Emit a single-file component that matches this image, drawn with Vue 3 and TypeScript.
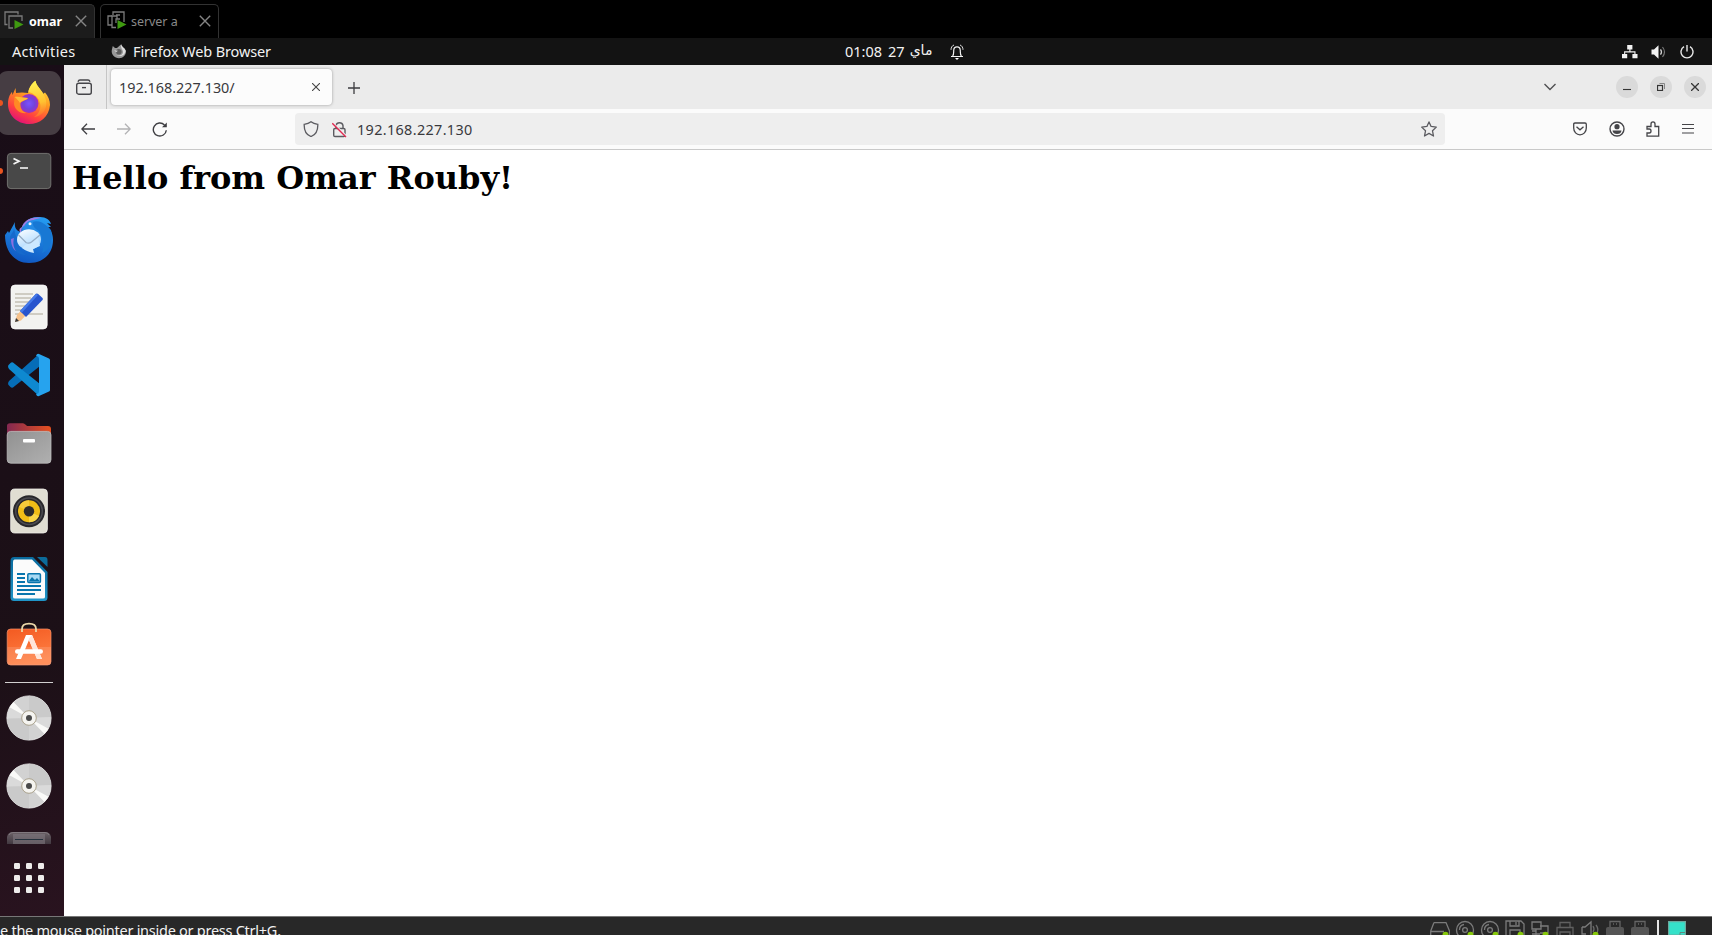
<script setup lang="ts">
const vmTabs = [
  { name: 'omar', active: true },
  { name: 'server a', active: false },
]
const dots = [0, 12, 24]
const statusDots = [true, true, true, true, true, false, true, false, false]
</script>

<template>
  <div class="screen">
    <header class="vm-tabs">
      <div v-for="t in vmTabs" :key="t.name" class="vm-tab" :class="{ active: t.active }">
        <svg class="vm-icon" width="20" height="20" viewBox="0 0 20 20" fill="none" stroke="#7b7b7b" stroke-width="1.3">
          <g v-if="t.active">
            <path d="M3.5 13.5H1V1H14V3.5" />
            <path d="M9 17H5V5H18V10" />
          </g>
          <g v-else>
            <path d="M6 4V1H17V11M5 14H1V5H5" />
            <path d="M9 16.5H5V5H10V8M9 12V8H13M9 4H13" />
          </g>
          <path d="M10.5 9L19.5 13.5L10.5 18Z" fill="#3f9a10" stroke="none" />
        </svg>
        <span class="vm-name">{{ t.name }}</span>
        <svg class="vm-close" width="12" height="12" viewBox="0 0 12 12" stroke="#858585" stroke-width="1.4"><path d="M.8.8L11.2 11.2M11.2.8L.8 11.2" /></svg>
      </div>
    </header>

    <div class="topbar">
      <span class="activities">Activities</span>
      <svg class="ff-mini" width="16" height="16" viewBox="0 0 16 16">
        <path d="M.8 6L1.8 2L4 4L6 4L10.2.3C10.7 3.3 13.6 3.5 14.8 7C15.5 11 12 14.2 8 14.2C3.6 14.2 0 10.5 .8 6Z" fill="#999" />
        <path d="M10.2.3C9 4 12.4 5.5 12 8.6C11.5 11.4 8 12.4 5 10.8C9 13.6 14 11.6 14.8 7C13.6 3.5 10.7 3.3 10.2.3Z" fill="#dedede" />
        <circle cx="7.8" cy="7.8" r="2.8" fill="#5c5c5c" /><path d="M3 6.3L7 6.7L5.2 8.2" fill="#d0d0d0" />
      </svg>
      <span class="app-name">Firefox Web Browser</span>
      <div class="clock"><span>01:08</span><span>27</span><span class="month" lang="ar">ماي</span></div>
      <svg class="bell" width="14" height="16" viewBox="0 0 14 16" fill="none" stroke="#f2f2f2" stroke-width="1.2">
        <path d="M1 12.5H13M2.6 12C4 10.5 3.6 8.5 3.7 6.5C3.8 1.7 10.2 1.7 10.3 6.5C10.4 8.5 10 10.5 11.4 12" />
        <path d="M4 1C2 1.7 1 3.6 1 5.8M10 1C12 1.7 13 3.6 13 5.8" stroke-width=".9" />
        <path d="M5 14H9L7 16Z" fill="#fff" stroke="none" />
      </svg>
      <div class="system">
        <svg width="16" height="14" viewBox="0 0 16 14" fill="#f2f2f2"><path d="M5.2 0H10.4V4.5H8.5V6.3H13.5V9H15.5V13.2H10.4V9H12.4V7.4H3.2V9H5.2V13.2H0V9H2.1V6.3H7.3V4.5H5.2Z" /></svg>
        <svg width="16" height="14" viewBox="0 0 16 14" fill="none"><path d="M.5 4.5H3L7.5 .3V13.7L3 9.5H.5Z" fill="#f2f2f2" /><path d="M9.5 4.4Q11.5 7 9.5 9.6" stroke="#d0d0d0" stroke-width="1.3" /><path d="M11.5 2Q15.5 7 11.5 12" stroke="#777" stroke-width="1.2" /></svg>
        <svg width="14" height="14" viewBox="0 0 14 14" fill="none" stroke="#e8e8e8" stroke-width="1.4"><path d="M7 0V6.5M4 1.7A6 6 0 1 0 10 1.7" /></svg>
      </div>
    </div>

    <div class="desktop">
      <nav class="dock">
        <svg class="slot" viewBox="0 0 64 64">
          <defs>
            <linearGradient id="ffa" x1=".8" y1="0" x2=".3" y2="1"><stop offset="0" stop-color="#fff04a" /><stop offset=".4" stop-color="#ff9a1f" /><stop offset=".75" stop-color="#ff4040" /><stop offset="1" stop-color="#e0107a" /></linearGradient>
            <linearGradient id="ffb" x1=".5" y1="0" x2=".6" y2="1"><stop offset="0" stop-color="#fff453" /><stop offset=".6" stop-color="#ffc231" /><stop offset="1" stop-color="#ff6a2c" /></linearGradient>
            <radialGradient id="ffc"><stop offset="0" stop-color="#7b52ff" /><stop offset=".6" stop-color="#7243d9" /><stop offset="1" stop-color="#a32fbd" /></radialGradient>
          </defs>
          <rect width="64" height="64" rx="11" fill="#463d43" />
          <circle cx="3" cy="32" r="3" fill="#e95420" />
          <path d="M18.5 17L19 22L25 21.5L31 22C32 16 36 11.5 38.5 9.8C39 15 45 19 46 23L48 21.5C51 25 53 29 53 34C52 46 43 53 32 53C20 53 11 44 11 33C11 27 13 23 15 21L15.5 24Z" fill="url(#ffa)" />
          <path d="M31.5 21C32 16 36 11.5 38.5 9.8C39 15 45 19 47.5 25C52 34 48 45 37 46C43 42 45 36 42 29C40 25 36 22 31.5 21Z" fill="url(#ffb)" />
          <circle cx="32" cy="32.5" r="9.5" fill="url(#ffc)" />
          <path d="M17.5 26C20 24 25 27 31 27C29 30 26 29 23.5 32C23 37 25 41 30 42C23 43 18 39 17 33Z" fill="#ff8a24" />
          <path d="M17.5 26C22 25 26 27 31 27C28 30 25 29 23 32C21 29 20 28 17.5 26Z" fill="#ffbd38" />
        </svg>
        <svg class="slot" viewBox="0 0 64 64">
          <circle cx="3" cy="32" r="3" fill="#e95420" />
          <rect x="10.4" y="14.4" width="43.4" height="35.2" rx="3.5" fill="#484848" stroke="#72726f" />
          <path d="M16.5 19.5L22 22.3L16.5 25" fill="none" stroke="#f4f4f4" stroke-width="1.8" /><path d="M23 29H31" stroke="#f4f4f4" stroke-width="1.6" />
        </svg>
        <svg class="slot" viewBox="0 0 64 64">
          <defs><linearGradient id="tba" x1=".7" y1="0" x2=".4" y2="1"><stop offset="0" stop-color="#259bf0" /><stop offset="1" stop-color="#1058c3" /></linearGradient><linearGradient id="tbb" x1="0" y1="0" x2=".5" y2="1"><stop offset="0" stop-color="#fff" /><stop offset="1" stop-color="#a8d7ff" /></linearGradient></defs>
          <path d="M8 28L11 24L12 26L18 15C17 21 20 24 24 25C24 16 32 9 43 10C49 10 53 13 54 17L50 16L54 20L51 20C55 24 56 29 56 33C56 47 46 56 32 56C18 56 8 45 8 28Z" fill="url(#tba)" />
          <path d="M25 20C27 14 34 9 44 11C37 12 34 14 31 18C27 18 24 20 24 26C21 23 23 21 25 20Z" fill="#a27be2" />
          <path d="M33 17C36 13 44 13 51 20L54 23C57 36 51 44 45 46C48 36 46 27 37 23C34 21 32 19 33 17Z" fill="#1878d4" />
          <path d="M26 23C27 17 31 13 37 13C34 16 37 22 42 24L45 30C40 25 32 24 26 27Z" fill="#258be5" />
          <path d="M13 31C13 42 21 48 29 48C23 44 21 39 21 31C18 30 18 24 17 22C16 26 13 28 13 31Z" fill="#1669cc" />
          <path d="M14 32C14 38 16 42 19 44C16 40 16 35 17 31Z" fill="#8b70df" />
          <ellipse cx="32" cy="32.5" rx="12" ry="10.3" fill="url(#tbb)" /><path d="M25 41C29 44 32 45 37 46L36 42L43 39L41 31L28 38Z" fill="#cbe8ff" /><path d="M21.5 28L29 35.5Q31.8 37 34.5 35L43 28" fill="none" stroke="#95adc6" stroke-width="1.3" /><circle cx="33" cy="16.8" r="1.5" fill="#e9f4ff" />
        </svg>
        <svg class="slot" viewBox="0 0 64 64">
          <rect x="14" y="10" width="36.2" height="44" rx="4" fill="#f2f2f0" stroke="#fff" stroke-width=".7" />
          <path d="M18 19H36M18 23H34M18 27H32M18 31H31M18 35H28M18 39H46" stroke="#c3c0b4" stroke-width="1.7" />
          <path d="M37 21L42 26L24 45.5L18 47L20 40Z" fill="#f7c28b" /><path d="M18 47L19 43L22 46Z" fill="#37383a" />
          <path d="M23 36L39 18.8Q40 18 41.2 19L45.5 23Q46.4 24 45.5 25L29 42Z" fill="#2855ce" /><path d="M23 36L39 18.8L41 20L24.8 37.7Z" fill="#4479e9" />
        </svg>
        <svg class="slot" viewBox="0 0 64 64">
          <path d="M12 38L42 11L43 23L16 44.5Q14.5 45 13.5 44L11.3 41.8Q10.4 40.3 12 38Z" fill="#066db7" />
          <path d="M12 26L42 53L43 41L16 19.5Q14.5 19 13.5 20L11.3 22.2Q10.4 23.7 12 26Z" fill="#0e89d0" />
          <path d="M42 11L52 15.5Q53 16 53 17V47Q53 48 52 48.5L42 53Q40 54 39 51Q42 51 42 48V16Q42 13 39 13Q40 10 42 11Z" fill="#26a3ee" />
        </svg>
        <svg class="slot" viewBox="0 0 64 64">
          <defs><linearGradient id="fla"><stop stop-color="#842851" /><stop offset="1" stop-color="#e65120" /></linearGradient><linearGradient id="flb" x2="1" y2="1"><stop stop-color="#919191" /><stop offset="1" stop-color="#b0b0b0" /></linearGradient></defs>
          <path d="M10 30V15Q10 12.3 13 12.3H26Q27 12.3 29 14L30 15H51Q54 15 54 18V30Z" fill="url(#fla)" /><rect x="10.2" y="20.4" width="43.8" height="31.8" rx="3.5" fill="url(#flb)" stroke="#bdbdbd" stroke-width=".8" /><rect x="26" y="28" width="12" height="3.4" rx="1" fill="#fff" />
        </svg>
        <svg class="slot" viewBox="0 0 64 64">
          <rect x="13.7" y="10" width="36.7" height="44" rx="4" fill="#e0ddd2" stroke="#efeee8" stroke-width=".8" />
          <circle cx="32" cy="32.2" r="16" fill="#28272b" /><circle cx="32" cy="32.2" r="13.3" fill="none" stroke="#4b4a50" stroke-width="1.5" /><circle cx="32" cy="32.2" r="11" fill="#f0bd16" /><path d="M32 32.2L22 27.7A11 11 0 0 1 32 21.2Z" fill="#f5cb3a" /><path d="M32 32.2L42 37A11 11 0 0 1 32 43.2Z" fill="#f8d547" /><circle cx="32" cy="32.2" r="5.2" fill="#2c2c2c" />
        </svg>
        <svg class="slot" viewBox="0 0 64 64">
          <defs><linearGradient id="lwa" x2="0" y2="1"><stop stop-color="#096a9d" /><stop offset="1" stop-color="#2095c8" /></linearGradient></defs>
          <path d="M17 10H36L50.5 25V50.5Q50.5 54 47 54H17Q13.5 54 13.5 50.5V14Q13.5 10 17 10Z" fill="url(#lwa)" /><path d="M17.5 12.5H35L48 26V50Q48 51.5 46 51.5H18Q16 51.5 16 50V15Q16 12.5 17.5 12.5Z" fill="#fbfbfb" /><path d="M40 10H48Q50.5 10 50.5 13V20Z" fill="#0c6b9a" />
          <path d="M20 27H28M20 31H28M20 35H28M20 39H44M20 43H44M20 47H38" stroke="#0875ad" stroke-width="2" /><rect x="30.8" y="26.8" width="12.6" height="8.6" rx="1" fill="#a7d9f3" stroke="#0875ad" stroke-width="1.5" /><path d="M31.5 34.5L35 30L38 33L40 31L43 34.5Z" fill="#0875ad" />
        </svg>
        <svg class="slot" viewBox="0 0 64 64">
          <defs><linearGradient id="swa" x2=".3" y2="1"><stop stop-color="#f35a21" /><stop offset="1" stop-color="#ff7f43" /></linearGradient></defs>
          <rect x="10.2" y="14" width="43.8" height="36" rx="3.5" fill="url(#swa)" stroke="#f5946f" stroke-width=".7" /><path d="M10.5 32H54V47Q54 50 51 50H13Q10.5 50 10.5 47Z" fill="#fff" opacity=".13" /><path d="M25 17V14Q25 8.7 32 8.7T39 14V17" fill="none" stroke="#ead6a8" stroke-width="1.8" />
          <path d="M29 20H35L45 44H40L32 25L24 44H19Z" fill="#fff" /><path d="M35 20L45 44H40L31.5 24Z" fill="#ffe5d9" /><rect x="18" y="34.3" width="28" height="4.5" rx="2.2" fill="#fff" />
        </svg>
        <i class="separator"></i>
        <svg v-for="n in 2" :key="n" class="slot" viewBox="0 0 64 64">
          <circle cx="32" cy="32" r="22.1" fill="#d2d2d2" stroke="#efefef" stroke-width=".8" /><path d="M32 32V9.8A22 22 0 0 1 54 31ZM32 32V54A22 22 0 0 1 10 33Z" fill="#cacaca" /><path d="M32 32L54 31A22 22 0 0 1 50 45ZM32 32L10 32A22 22 0 0 1 13 21Z" fill="#dadada" /><path d="M32 32L12.5 21.2L16.5 16ZM32 32L51.5 42.8L47.5 48Z" fill="#fafaf8" /><circle cx="32" cy="32" r="7.3" fill="#f5f4f0" stroke="#aaa28d" /><circle cx="32" cy="32" r="3" fill="#4a4a4a" />
        </svg>
        <svg class="drive" viewBox="0 0 64 22">
          <defs><linearGradient id="dra" x2="0" y2="1"><stop stop-color="#6c6268" /><stop offset="1" stop-color="#413840" /></linearGradient></defs>
          <path d="M10 22V15Q11 10 16 10H48Q53 10 54 15V22Z" fill="url(#dra)" /><path d="M12 13Q13 10.5 16 10.5H48Q51 10.5 52 13" fill="none" stroke="#918990" stroke-width=".6" /><rect x="16" y="12" width="32" height="10" fill="#847c84" opacity=".55" /><path d="M18 17.5H46" stroke="#25313d" />
        </svg>
        <svg class="grid" width="30" height="30" viewBox="0 0 30 30" fill="#eeeceb"><template v-for="y in dots" :key="y"><rect v-for="x in dots" :key="x" :x="x" :y="y" width="6" height="6" rx="1.2" /></template></svg>
      </nav>

      <main class="browser">
        <div class="tabbar">
          <div class="view-button"><svg width="16" height="16" viewBox="0 0 16 16" fill="none" stroke="#454549" stroke-width="1.4"><rect x=".7" y="4.2" width="14.6" height="11" rx="2" /><path d="M2 2.8Q2.6 1 4 1H12Q13.4 1 14 2.8" /><path d="M6 8.6H10" /></svg></div>
          <div class="tab"><span>192.168.227.130/</span><svg width="8" height="8" viewBox="0 0 8 8" stroke="#454545" stroke-width="1.1"><path d="M0 0L8 8M8 0L0 8" /></svg></div>
          <svg class="plus" width="12" height="12" viewBox="0 0 12 12" stroke="#3d3d40" stroke-width="1.3"><path d="M6 0V12M0 6H12" /></svg>
          <svg class="chevron" width="12" height="8" viewBox="0 0 12 8" fill="none" stroke="#505052" stroke-width="1.4"><path d="M.5 1L6 6.5L11.5 1" /></svg>
          <div class="window-buttons">
            <span><svg width="8" height="8" viewBox="0 0 8 8" fill="none" stroke="#353535" stroke-width="1.1"><path d="M0 6.5H8" /></svg></span>
            <span><svg width="8" height="8" viewBox="0 0 8 8" fill="none" stroke="#353535"><rect x=".5" y="2.5" width="5" height="5" stroke-width="1.2" /><path d="M2.5.5H7.5V6" stroke="#858585" /></svg></span>
            <span><svg width="8" height="8" viewBox="0 0 8 8" stroke="#353535" stroke-width="1.3"><path d="M0 0L8 8M8 0L0 8" /></svg></span>
          </div>
        </div>
        <div class="toolbar">
          <svg class="back" width="14" height="12" viewBox="0 0 14 12" fill="none" stroke="#3e3e42" stroke-width="1.3"><path d="M14 6H1M6 .7L.8 6L6 11.3" /></svg>
          <svg class="forward" width="14" height="12" viewBox="0 0 14 12" fill="none" stroke="#b2b2b4" stroke-width="1.3"><path d="M0 6H13M8 .7L13.2 6L8 11.3" /></svg>
          <svg class="reload" width="16" height="16" viewBox="0 0 16 16" fill="none" stroke="#3e3e42" stroke-width="1.4"><path d="M12.5 4A6.5 6.5 0 1 0 14.3 9.2" /><path d="M14.8 1.5V6.3H10Z" fill="#3e3e42" stroke="none" /></svg>
          <div class="address">
            <svg class="shield" width="16" height="16" viewBox="0 0 16 16" fill="none" stroke="#5b5b60" stroke-width="1.3"><path d="M8 .8Q10.5 3 14.8 3.3C15 9 13.5 13.5 8 15.5C2.5 13.5 1 9 1.2 3.3Q5.5 3 8 .8Z" /></svg>
            <svg class="lock" width="15" height="17" viewBox="0 0 15 17" fill="none" stroke="#5b5b60" stroke-width="1.4"><rect x="1.7" y="7.5" width="11.3" height="8" rx="1.3" /><path d="M4 7.5V4.5A3.6 3.6 0 0 1 11 4.5V7.5" /><path d="M1 1.6L14.3 14.8" stroke="#eee" stroke-width="1.3" /><path d="M.3 2.3L14 16" stroke="#e22850" stroke-width="1.3" /></svg>
            <span>192.168.227.130</span>
            <svg class="star" width="16" height="16" viewBox="0 0 16 16" fill="none" stroke="#5b5b60" stroke-width="1.3" stroke-linejoin="round"><path d="M8 .9L10.1 5.4L15.3 6.1L11.5 9.8L12.5 15L8 12.4L3.5 15L4.5 9.8L.7 6.1L5.9 5.4Z" /></svg>
          </div>
          <div class="actions">
            <svg width="14" height="14" viewBox="0 0 14 14" fill="none" stroke="#454549" stroke-width="1.3"><path d="M2 1H12Q13.3 1 13.3 2.3V6C13.3 10 10.5 12.8 7 12.8S.7 10 .7 6V2.3Q.7 1 2 1Z" /><path d="M3.5 4.7L7 7.8L10.5 4.7" /></svg>
            <svg width="16" height="16" viewBox="0 0 16 16"><circle cx="8" cy="8" r="7" fill="none" stroke="#454549" stroke-width="1.4" /><circle cx="8" cy="5.7" r="2.6" fill="#454549" /><path d="M3.5 9.5H12.5Q12 13 8 13T3.5 9.5Z" fill="#454549" /></svg>
            <svg width="14" height="16" viewBox="0 0 14 16" fill="none" stroke="#454549" stroke-width="1.3"><path d="M1 8V5.5H5V3Q5 .8 7 .8T9 3V5.5H12.7V15.2H1V12H3.2Q5 12 5 10T3.2 8Z" /></svg>
            <svg width="12" height="12" viewBox="0 0 12 12" stroke="#454549" stroke-width="1.2"><path d="M0 1.5H12M0 5.5H12M0 10H12" /></svg>
          </div>
        </div>
        <article><h1>Hello from Omar Rouby!</h1></article>
      </main>
    </div>

    <footer class="statusbar">
      <span class="hint">e the mouse pointer inside or press Ctrl+G.</span>
      <div class="devices">
        <svg v-for="(on, i) in statusDots" :key="i" width="20" height="15" viewBox="0 0 20 15" fill="none" stroke="#7b7b7b" stroke-width="1.3">
          <path v-if="i === 0" d="M4 2.6H16L19.5 11V15M4 2.6L.7 11V15M1 11.5H14" />
          <g v-else-if="i < 3"><circle cx="10" cy="10" r="8.5" /><circle cx="10" cy="10" r="2.4" /><path d="M4.5 10A5.5 5.5 0 0 1 9 4.5" /></g>
          <path v-else-if="i === 3" d="M1 15V1H16L19 4V15M5 1V6H14V1M11 2V5M5 15V10H15V15" />
          <path v-else-if="i === 4" d="M2 2H11V9H2ZM10 6H18V13H10M2 11H6M6 9V15M2 14H10" />
          <path v-else-if="i === 5" d="M5 7V2.5H15V7M2 15V7.5H18V15M5 15V12H15V15" stroke="#606060" />
          <g v-else-if="i === 6"><path d="M2 7H5L11 2V15M2 7V14H6" /><path d="M13 6Q15 9 13 12M16 5Q19 9 17 13" stroke="#696969" /></g>
          <g v-else stroke="#656565"><path d="M5 7V1.5H15V7" /><path d="M1 15V9Q1 7 3 7H17Q19 7 19 9V15Z" fill="#555" stroke="none" /><path d="M8 4H9M11 4H12" /></g>
          <circle v-if="on" cx="15.5" cy="14.7" r="3" fill="#86c80b" stroke="none" />
        </svg>
        <i class="divider"></i>
        <svg class="note" width="18" height="15" viewBox="0 0 18 15"><path d="M.6 1.6H17.4V15H.6Z" fill="#35e1c9" stroke="#6ba99e" stroke-width="1.2" /><path d="M12 15V12.5H17" fill="none" stroke="#62877f" /></svg>
      </div>
    </footer>
  </div>
</template>

<style>
body { margin: 0; overflow: hidden; background: #000; }
</style>
<style scoped>
.screen { width: 1712px; height: 935px; overflow: hidden; display: flex; flex-direction: column; background: #000; font-family: "Noto Sans", sans-serif; }
.screen * { box-sizing: border-box; }
svg { display: block; flex: none; }
span { white-space: nowrap; }
.vm-tabs { height: 38px; flex: none; display: flex; align-items: flex-end; gap: 5px; }
.vm-tab { height: 34px; width: 119px; border: 1px solid #323232; border-bottom: 0; border-radius: 5px 5px 0 0; display: flex; align-items: center; padding: 0 7px 1px 6px; color: #898989; font-size: 12.5px; }
.vm-tab.active { width: 95px; border-left: 0; border-radius: 0 5px 0 0; background: #1c1c1c; color: #fff; font-weight: 700; padding-left: 4px; }
.vm-name { margin-left: 4px; letter-spacing: -.05px; }
.active .vm-name { letter-spacing: 0; margin-left: 5px; }
.vm-close { margin-left: auto; }
.topbar { height: 27px; flex: none; background: #131313; color: #f2f2f2; display: flex; align-items: center; font-size: 14.5px; }
.topbar > span, .clock { padding-bottom: 2px; }
.activities { width: 100px; padding-left: 12px; letter-spacing: .3px; }
.ff-mini { margin-left: 11px; }
.app-name { margin-left: 6px; width: 712px; letter-spacing: -.12px; }
.clock { display: flex; width: 105px; }
.clock span + span { margin-left: 6px; }
.clock .month { font-family: "DejaVu Sans", sans-serif; font-size: 14px; padding-top: 1px; margin-left: 5px; }
.system { margin-left: auto; margin-right: 18px; display: flex; gap: 13px; align-items: center; }
.desktop { height: 851px; flex: none; display: flex; }
.dock { width: 64px; background: linear-gradient(165deg, #190d17, #1c1017 70%, #29131f); padding-top: 6px; overflow: hidden; flex: none; display: flex; flex-direction: column; }
.slot { width: 64px; height: 64px; margin: 0 0 4px -3px; }
.separator { width: 48px; height: 1px; background: #d1cfd0; margin: -1px 0 3px 5px; }
.drive { width: 64px; height: 22px; margin-left: -3px; }
.grid { margin: 19px 0 0 14px; }
.browser { flex: 1; min-width: 0; background: #fff; color: #39393d; }
.tabbar { height: 44px; display: flex; align-items: center; background: #ebebeb; }
.view-button { width: 43px; height: 44px; border-right: 1px solid #c5c5c5; display: flex; align-items: center; justify-content: center; padding-right: 2px; }
.tab { width: 221px; height: 36px; margin-left: 4px; border-radius: 4px; background: #fcfcfc; box-shadow: 0 0 3px #999; display: flex; align-items: center; justify-content: space-between; padding: 0 12px 0 8px; font-size: 14.4px; }
.plus { margin-left: 16px; margin-top: 1px; }
.chevron { margin-left: auto; }
.window-buttons { display: flex; gap: 12px; margin: 0 6px 0 60px; }
.window-buttons span { width: 22px; height: 22px; border-radius: 50%; background: #dadada; display: flex; align-items: center; justify-content: center; }
.toolbar { height: 41px; display: flex; align-items: center; background: #fbfbfb; border-bottom: 1px solid #c9c9c9; }
.back { margin-left: 17px; }
.forward { margin-left: 22px; }
.reload { margin-left: 21px; }
.address { width: 1150px; height: 32px; margin-left: 127px; border-radius: 4px; background: #eee; display: flex; align-items: center; font-size: 14.4px; }
.shield { margin-left: 8px; }
.lock { margin-left: 13px; }
.address span { margin-left: 10px; letter-spacing: .35px; }
.star { margin-left: auto; margin-right: 8px; }
.actions { flex: 1; display: flex; align-items: center; justify-content: flex-end; padding-right: 18px; gap: 21.7px; }
article { padding: 9px 8px; color: #000; }
h1 { margin: 0; font: 700 32px/38px "DejaVu Serif", serif; white-space: nowrap; }
.statusbar { height: 19px; flex: none; border-top: 1px solid #777; background: #282828; color: #f2f2f2; display: flex; justify-content: space-between; align-items: flex-start; overflow: hidden; }
.hint { font-size: 14.5px; line-height: 18px; letter-spacing: -.26px; margin-top: 4px; }
.devices { display: flex; gap: 5px; padding-top: 3px; margin-right: 26px; }
.divider { width: 2px; height: 16px; background: #e6e6e6; margin-left: 2px; }
.note { margin-left: 4px; }
</style>
